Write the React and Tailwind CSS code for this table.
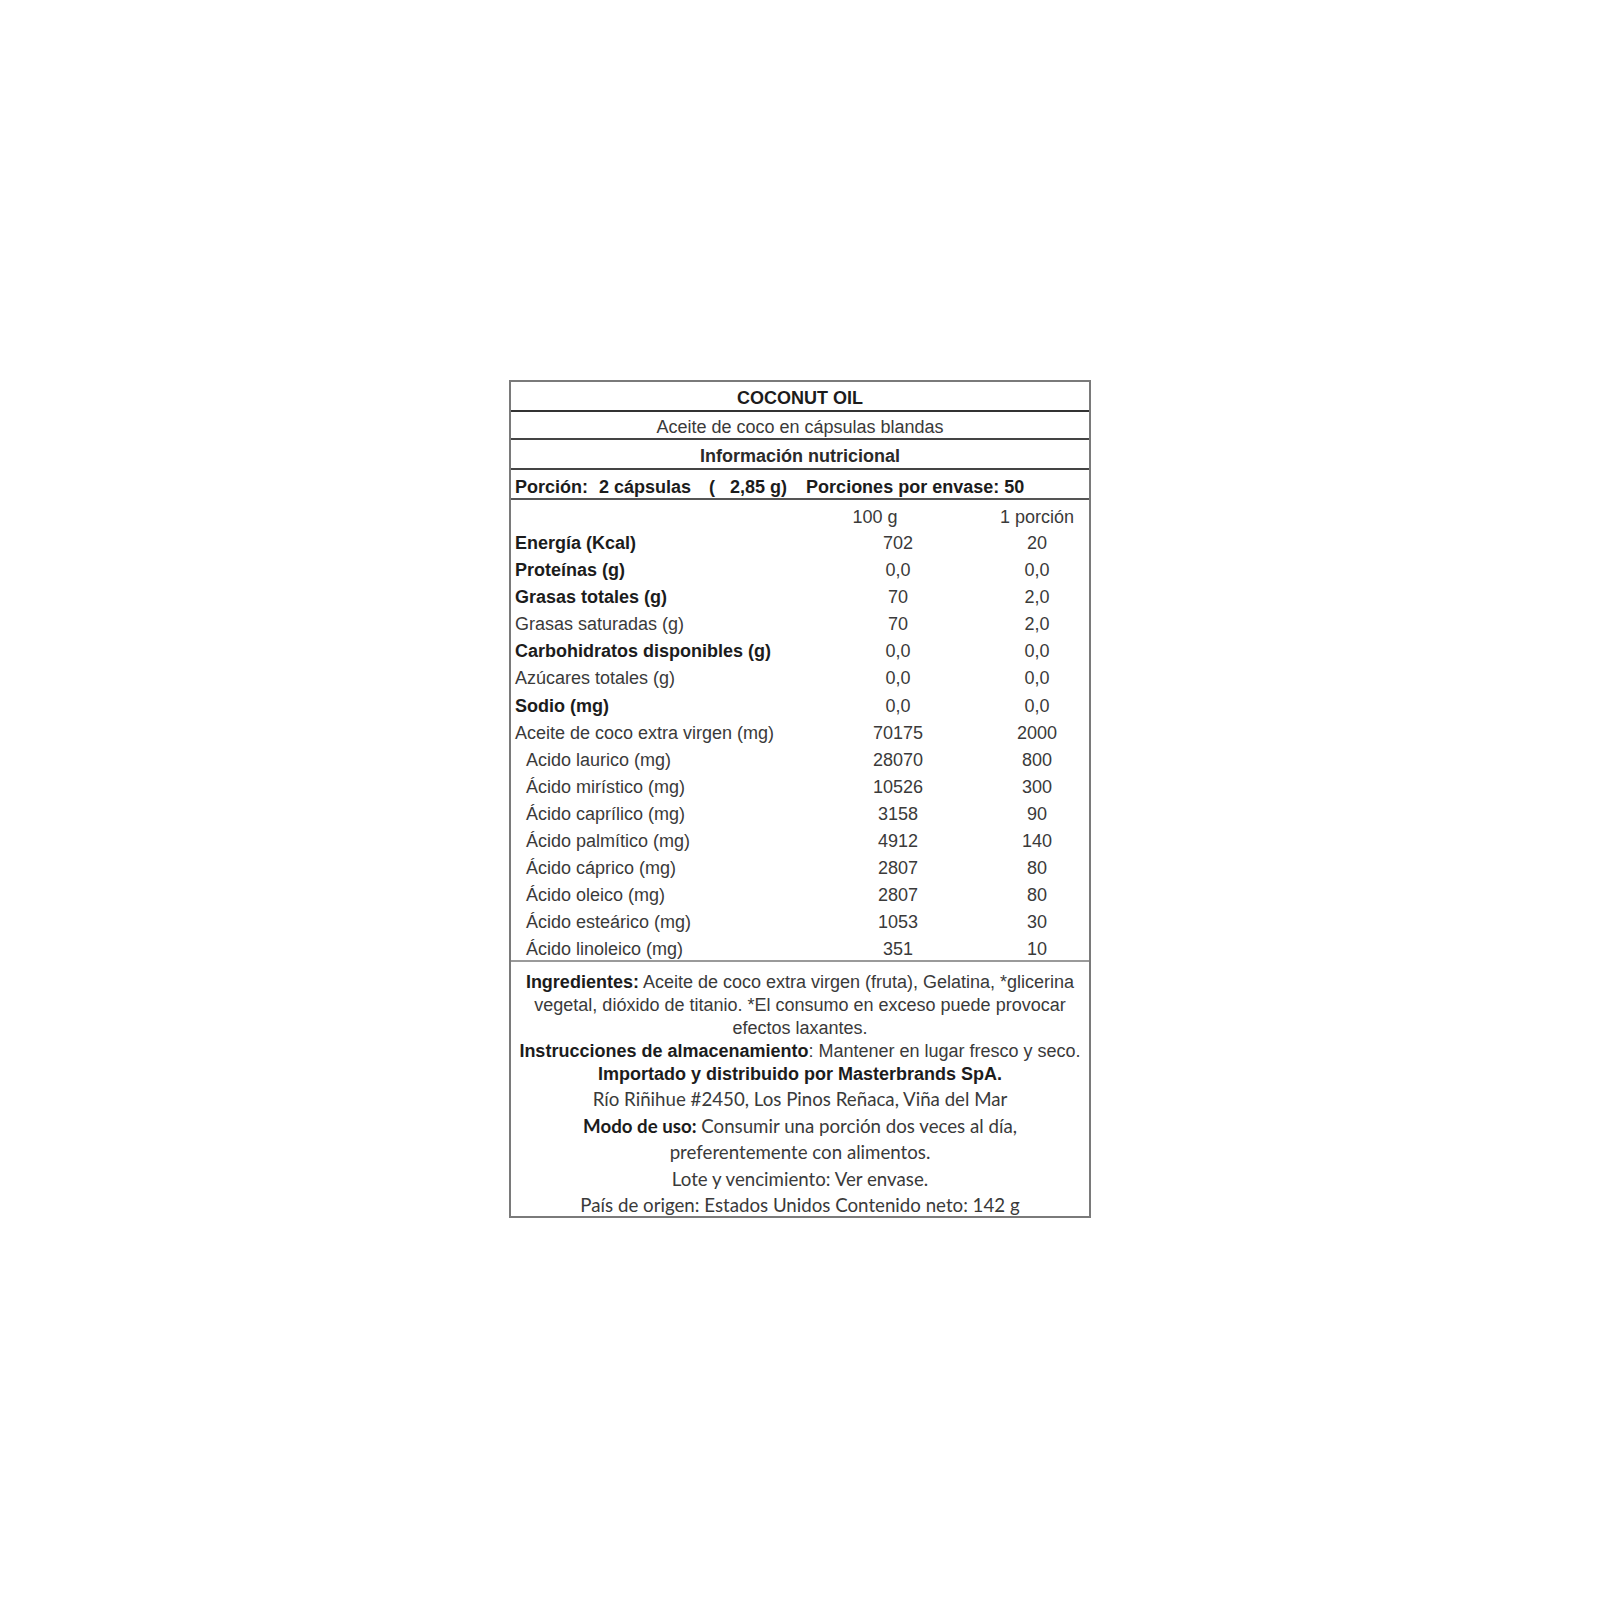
const rows = [
  { label: 'Energía (Kcal)', a: '702', b: '20', bold: true },
  { label: 'Proteínas (g)', a: '0,0', b: '0,0', bold: true },
  { label: 'Grasas totales (g)', a: '70', b: '2,0', bold: true },
  { label: 'Grasas saturadas (g)', a: '70', b: '2,0' },
  { label: 'Carbohidratos disponibles (g)', a: '0,0', b: '0,0', bold: true },
  { label: 'Azúcares totales (g)', a: '0,0', b: '0,0' },
  { label: 'Sodio (mg)', a: '0,0', b: '0,0', bold: true },
  { label: 'Aceite de coco extra virgen (mg)', a: '70175', b: '2000' },
  { label: 'Acido laurico (mg)', a: '28070', b: '800', sub: true },
  { label: 'Ácido mirístico (mg)', a: '10526', b: '300', sub: true },
  { label: 'Ácido caprílico (mg)', a: '3158', b: '90', sub: true },
  { label: 'Ácido palmítico (mg)', a: '4912', b: '140', sub: true },
  { label: 'Ácido cáprico (mg)', a: '2807', b: '80', sub: true },
  { label: 'Ácido oleico (mg)', a: '2807', b: '80', sub: true },
  { label: 'Ácido esteárico (mg)', a: '1053', b: '30', sub: true },
  { label: 'Ácido linoleico (mg)', a: '351', b: '10', sub: true },
];

export default function App() {
  return (
    <div className="min-h-[1600px] bg-white pt-[380px] font-['Liberation_Sans',Arial,sans-serif] text-[18px] text-[#3a3a3a]">
      <div className="mx-auto w-[582px] border-2 border-[#7a7a7a] bg-white">
        {/* title block */}
        <div className="h-[30px] border-b-2 border-[#333] pt-[5px] text-center font-bold leading-[23px] text-[#1c1c1c]">
          COCONUT OIL
        </div>
        <div className="h-[28px] border-b-2 border-[#444] pt-[5px] text-center leading-[21px]">
          Aceite de coco en cápsulas blandas
        </div>
        <div className="h-[30px] border-b-2 border-[#444] pt-[5px] text-center font-bold leading-[23px] text-[#2a2a2a]">
          Información nutricional
        </div>
        <div className="h-[30px] border-b-2 border-[#555] pl-[4px] pt-[6px] font-bold leading-[22px] text-[#1c1c1c]">
          <span>Porción:</span>
          <span className="ml-[11px]">2 cápsulas</span>
          <span className="ml-[18px]">(</span>
          <span className="ml-[15px]">2,85 g)</span>
          <span className="ml-[19px]">Porciones por envase: 50</span>
        </div>

        {/* nutrient table */}
        <div className="h-[462px] border-b-2 border-[#9a9a9a] pt-[5px]">
          <div className="grid grid-cols-[1fr_100px_100px] gap-x-[39px] pr-[2px] leading-[25px]">
            <div />
            <div className="pr-[46px] text-center">100 g</div>
            <div className="text-center">1 porción</div>
          </div>
          {rows.map((r) => (
            <div key={r.label} className="grid grid-cols-[1fr_100px_100px] gap-x-[39px] pr-[2px] leading-[27.1px]">
              <div className={`${r.sub ? 'pl-[15px]' : 'pl-[4px]'} ${r.bold ? 'font-bold text-[#1c1c1c]' : ''}`}>
                {r.label}
              </div>
              <div className="text-center">{r.a}</div>
              <div className="text-center">{r.b}</div>
            </div>
          ))}
        </div>

        {/* footer notes */}
        <div className="h-[254px] pt-[9px] text-center">
          <div className="leading-[23px]">
            <div>
              <b className="text-[#1c1c1c]">Ingredientes:</b> Aceite de coco extra virgen (fruta), Gelatina, *glicerina
            </div>
            <div>vegetal, dióxido de titanio. *El consumo en exceso puede provocar</div>
            <div>efectos laxantes.</div>
            <div className="whitespace-nowrap">
              <b className="text-[#1c1c1c]">Instrucciones de almacenamiento</b>: Mantener en lugar fresco y seco.
            </div>
            <div className="font-bold text-[#1c1c1c]">Importado y distribuido por Masterbrands SpA.</div>
          </div>
          <div className="font-['Lato',sans-serif] text-[18.7px] leading-[26.5px] text-[#3a3a3a]">
            <div>Río Riñihue #2450, Los Pinos Reñaca, Viña del Mar</div>
            <div>
              <b className="text-[#1c1c1c]">Modo de uso:</b> Consumir una porción dos veces al día,
            </div>
            <div>preferentemente con alimentos.</div>
            <div>Lote y vencimiento: Ver envase.</div>
            <div>País de origen: Estados Unidos Contenido neto: 142 g</div>
          </div>
        </div>
      </div>
    </div>
  );
}
